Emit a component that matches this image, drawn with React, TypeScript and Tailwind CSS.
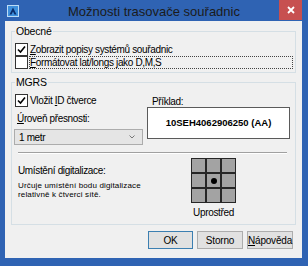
const font = { fontFamily: '"Liberation Sans", Arial, sans-serif' };

const Check = ({ checked }: { checked?: boolean }) => (
  <span className="w-[13px] h-[13px] shrink-0 border border-[#333] bg-white flex items-center justify-center">
    {checked && (
      <svg width="9" height="9" viewBox="0 0 9 9">
        <path d="M1 4.5 L3.5 7 L8 1.5" stroke="#000" strokeWidth="1.6" fill="none" />
      </svg>
    )}
  </span>
);

const Btn = ({ children, main }: { children: React.ReactNode; main?: boolean }) => (
  <button
    className={
      "h-[18px] flex items-center justify-center text-[10px] tracking-[-0.2px] text-black bg-[#e1e1e1] border " +
      (main ? "border-[#3c7fb1] w-[45px]" : "border-[#adadad] w-[46px]")
    }
  >
    {children}
  </button>
);

export default function App() {
  return (
    <div className="w-[308px] h-[266px] bg-[#2f63b3] flex flex-col" style={font}>
      {/* title bar */}
      <div className="h-[21px] grid grid-cols-[1fr_auto_1fr] items-center">
        <div className="pl-[7px] flex items-center">
          <svg width="12" height="12" viewBox="0 0 12 12">
            <rect x="0.5" y="0.5" width="11" height="11" fill="#3d8fdc" stroke="#bcdcf6" />
            <path d="M6 2.5 L9.5 9.5 L7.5 9.5 L6 6.5 L4.5 9.5 L2.5 9.5 Z" fill="#0b2d6b" />
          </svg>
        </div>
        <div className="text-[13px] text-[#1b1b1b] leading-none pt-[1px]">Možnosti trasovače souřadnic</div>
        <div className="flex justify-end self-start pr-[6px]">
          <div className="w-[23px] h-[20px] bg-[#c75050] flex items-center justify-center">
            <svg width="8" height="8" viewBox="0 0 8 8">
              <path d="M1 1 L7 7 M7 1 L1 7" stroke="#fff" strokeWidth="1.8" />
            </svg>
          </div>
        </div>
      </div>

      {/* client */}
      <div className="ml-[5px] mr-[6px] h-[237px] bg-[#f0f0f0] px-[6px] pt-[4px] text-[10px] tracking-[-0.35px] text-black flex flex-col">
        <fieldset className="border border-[#d5dfe5] pl-[3px] pr-[2px] pb-[3px]">
          <legend className="px-[1px] leading-[13px] text-[10.5px] tracking-[-0.2px]">Obecné</legend>
          <div className="mt-[5px] h-[13px] flex items-center gap-[2px]">
            <Check checked />
            <span className="leading-[13px]">
              <u>Z</u>obrazit popisy systémů souřadnic
            </span>
          </div>
          <div className="h-[13px] flex items-center gap-[1px]">
            <Check />
            <span className="flex-1 leading-[11px] border border-dotted border-[#444]">
              <u>F</u>ormátovat lat/longs jako D,M,S
            </span>
          </div>
        </fieldset>

        <fieldset className="mt-[3px] border border-[#d5dfe5] pl-[3px] pr-[5px] h-[149px]">
          <legend className="px-[1px] leading-[13px] text-[10.5px] tracking-[-0.2px]">MGRS</legend>
          <div className="mt-[5px] flex gap-[4px]">
            <div className="w-[128px] flex flex-col">
              <div className="h-[13px] flex items-center gap-[2px]">
                <Check checked />
                <span>
                  Vložit <u>I</u>D čtverce
                </span>
              </div>
              <div className="mt-[5px] pl-[2px] leading-[13px]">
                <u>Ú</u>roveň přesnosti:
              </div>
              <div className="mt-[4px] -ml-[1px] h-[16px] border border-[#acacac] bg-[#e5e5e5] flex items-center justify-between pl-[4px] pr-[7px]">
                <span>1 metr</span>
                <svg width="6" height="4" viewBox="0 0 6 4">
                  <path d="M0.5 0.5 L3 3 L5.5 0.5" stroke="#777" fill="none" />
                </svg>
              </div>
            </div>
            <div className="flex-1 flex flex-col">
              <div className="pl-[5px] h-[13px] leading-[13px] mt-[1px]">Příklad:</div>
              <div className="mt-[-1px] h-[32px] border border-[#5a5a5a] bg-white flex items-center justify-center font-bold text-[9.5px] tracking-normal">
                10SEH4062906250 (AA)
              </div>
            </div>
          </div>
          <div className="mt-[7px] mx-[3px] h-[2px] border-t border-[#a0a0a0] border-b border-b-white" />
          <div className="mt-[10px] flex">
            <div className="w-[176px] pl-[3px] flex flex-col">
              <div className="leading-[13px]">Umístění digitalizace:</div>
              <div className="mt-[4px] text-[8px] leading-[9px] tracking-[0.15px]">
                Určuje umístění bodu digitalizace
                <br />
                relativně k čtverci sítě.
              </div>
            </div>
            <div className="flex flex-col items-center -mt-[6px]">
              <div className="grid grid-cols-[13px_13px_13px] gap-[2px] p-[1px] bg-[#262626]">
                {Array.from({ length: 9 }).map((_, i) => (
                  <div key={i} className="h-[13px] bg-[#a3a3a3] flex items-center justify-center">
                    {i === 4 && <span className="w-[6px] h-[6px] rounded-full bg-black" />}
                  </div>
                ))}
              </div>
              <div className="mt-[3px] leading-[13px]">Uprostřed</div>
            </div>
          </div>
        </fieldset>

        <div className="mt-[6px] flex justify-end gap-[4px] pr-[3px]">
          <Btn main>OK</Btn>
          <Btn>Storno</Btn>
          <Btn>
            <span>
              <u>N</u>ápověda
            </span>
          </Btn>
        </div>
      </div>
    </div>
  );
}
